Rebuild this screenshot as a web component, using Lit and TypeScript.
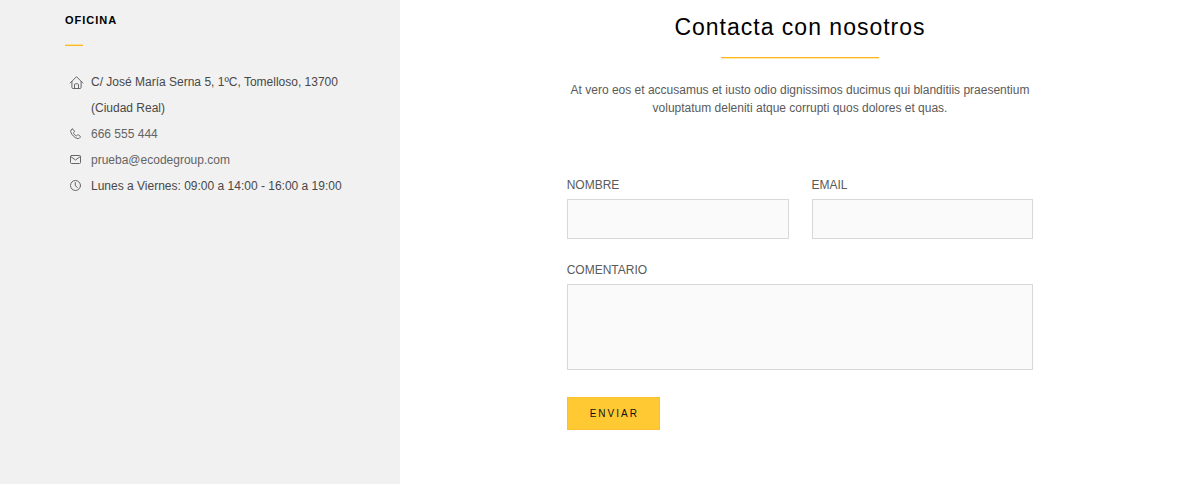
import { LitElement, html, css, svg } from "lit";
import { customElement } from "lit/decorators.js";

const home = svg`<path d="M2.2 9 8.500 2.700l6.300 6.300M3.900 7.500v5.800q0 1.200 1.200 1.200h6.800q1.200 0 1.200-1.200V7.500M6.500 14.300v-3.700q0-.8.8-.8h2.400q.8 0 .8.8v3.700" />`;
const phone = svg`<path d="M4 3.200 3 4.100q-.7.9 0 2.600.9 1.900 2.500 3.500 1.600 1.500 3.500 2.200 1.500.5 2.300-.2l1-1q.4-.6-.2-1L10.400 8.900q-.5-.3-1 .1l-.7.700q-.4.3-1-.1-1.300-.8-2.100-2.100-.3-.5 0-.9l.7-.7q.3-.4.1-.9L5 3.300q-.5-.5-1-.1Z" />`;
const mail = svg`<rect x="2.500" y="3.500" width="10" height="8" rx="1" /><path d="m2.800 4.600 4.700 3.400 4.700-3.400" />`;
const clock = svg`<circle cx="7.500" cy="7.500" r="5" /><path d="M7.300 4.500v3.300l2 1.500" />`;

@customElement("app-root")
export class AppRoot extends LitElement {
  static styles = css`
    :host {
      display: block;
      font-family: "Liberation Sans", Arial, sans-serif;
      font-size: 12px;
      color: #5a5a5a;
    }
    .page {
      display: grid;
      grid-template-columns: 1fr 2fr;
      min-height: 100vh;
      background: #fff;
    }
    .office {
      background: #f1f1f1;
      padding: 11px 40px 11px 65px;
    }
    .office-title {
      margin: 0;
      font-size: 11px;
      line-height: 18px;
      letter-spacing: 1px;
      color: #000;
    }
    .rule {
      height: 1px;
      margin: 15px 0 0;
      border: 0;
      border-bottom: 1px solid #ffe9b0;
      background: #ffb81c;
    }
    .short {
      width: 18px;
      border: 0;
      border-top: 1px solid #f7dfa8;
    }
    .centered {
      width: 34%;
      margin: 15px auto 0;
    }
    .details {
      list-style: none;
      margin: 23px 0 0;
      padding: 0;
      line-height: 26px;
      color: #484848;
    }
    .detail {
      display: grid;
      grid-template-columns: 16px 1fr;
      column-gap: 7px;
      padding-left: 3px;
    }
    .icon {
      width: 16px;
      height: 16px;
      margin-top: 5px;
      fill: none;
      stroke: #666;
      stroke-width: 1;
      stroke-linecap: round;
      stroke-linejoin: round;
    }
    .link {
      color: #646464;
      text-decoration: none;
    }
    .contact {
      box-sizing: border-box;
      width: 58.333%;
      margin: 0 auto;
      padding: 12px 0 54px;
    }
    .title {
      margin: 0;
      text-align: center;
      font-size: 23px;
      font-weight: 400;
      line-height: 30px;
      letter-spacing: 1px;
      color: #000;
    }
    .intro {
      margin: 22px 0 60px;
      text-align: center;
      line-height: 18px;
    }
    .form {
      display: grid;
      grid-template-columns: 1fr 1fr;
      column-gap: 23px;
      row-gap: 23px;
    }
    .field {
      display: flex;
      flex-direction: column;
      gap: 6px;
    }
    .wide {
      grid-column: 1 / -1;
    }
    .label {
      line-height: 16px;
      text-transform: uppercase;
    }
    .control {
      box-sizing: border-box;
      display: block;
      width: 100%;
      height: 40px;
      margin: 0;
      padding: 8px 12px;
      border: 1px solid #d8d8d8;
      border-radius: 0;
      background: #fafafa;
      color: inherit;
      font: inherit;
    }
    .area {
      height: 86px;
      resize: none;
    }
    .send {
      justify-self: start;
      margin-top: 4px;
      padding: 0 20px 0 22px;
      height: 33px;
      border: 1px solid #fdbf2d;
      background: #ffc933;
      font-family: inherit;
      font-size: 10px;
      letter-spacing: 2px;
      text-transform: uppercase;
      color: #111;
    }
  `;

  private details = [
    { icon: home, text: "C/ José María Serna 5, 1ºC, Tomelloso, 13700 (Ciudad Real)" },
    { icon: phone, text: "666 555 444", href: "tel:666555444" },
    { icon: mail, text: "prueba@ecodegroup.com", href: "mailto:prueba@ecodegroup.com" },
    { icon: clock, text: "Lunes a Viernes: 09:00 a 14:00 - 16:00 a 19:00" },
  ];

  render() {
    return html`
      <div class="page">
        <aside class="office">
          <h2 class="office-title">OFICINA</h2>
          <hr class="rule short" />
          <ul class="details">
            ${this.details.map(
              (d) => html`<li class="detail">
                <svg class="icon" viewBox="0 0 16 16" aria-hidden="true">${d.icon}</svg>
                ${d.href
                  ? html`<a class="link" href=${d.href}>${d.text}</a>`
                  : html`<span>${d.text}</span>`}
              </li>`
            )}
          </ul>
        </aside>
        <main class="contact">
          <h1 class="title">Contacta con nosotros</h1>
          <hr class="rule centered" />
          <p class="intro">
            At vero eos et accusamus et iusto odio dignissimos ducimus qui blanditiis praesentium
            voluptatum deleniti atque corrupti quos dolores et quas.
          </p>
          <form class="form" @submit=${(e: Event) => e.preventDefault()}>
            <div class="field">
              <label class="label" for="name">Nombre</label>
              <input class="control" id="name" type="text" />
            </div>
            <div class="field">
              <label class="label" for="email">Email</label>
              <input class="control" id="email" type="email" />
            </div>
            <div class="field wide">
              <label class="label" for="comment">Comentario</label>
              <textarea class="control area" id="comment"></textarea>
            </div>
            <button class="send" type="submit">Enviar</button>
          </form>
        </main>
      </div>
    `;
  }
}
